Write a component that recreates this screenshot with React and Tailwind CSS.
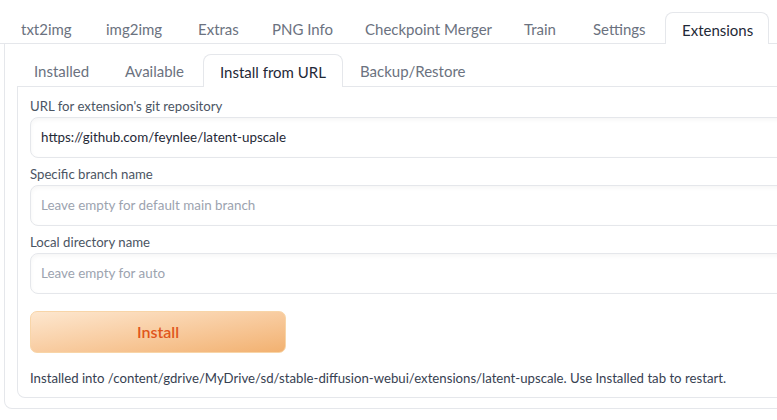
export default function App() {
  const topTabs = [
    ["txt2img", 85],
    ["img2img", 92],
    ["Extras", 74],
    ["PNG Info", 93],
    ["Checkpoint Merger", 159],
    ["Train", 69],
    ["Settings", 88],
  ];
  const innerTabs = [
    ["Installed", 91],
    ["Available", 95],
  ];
  return (
    <div
      className="w-[777px] h-[420px] overflow-hidden bg-white"
      style={{ fontFamily: "Lato, 'Noto Sans', sans-serif" }}
    >
      <div className="w-[800px] pl-[4px] pt-[13px]">
        {/* top tabs */}
        <div className="flex items-end h-[31px] border-b border-[#e5e7eb] -ml-[4px] pl-[5px]">
          {topTabs.map(([t, w]) => (
            <div
              key={t}
              className="h-[31px] flex items-center pt-[3px] pl-[16px] whitespace-nowrap text-[15px] text-[#6b7280] shrink-0"
              style={{ width: w }}
            >
              {t}
            </div>
          ))}
          <div className="relative h-[32px] -mb-px w-[104px] shrink-0 flex items-center pt-[3px] pl-[16px] whitespace-nowrap text-[15px] text-[#1f2937] bg-white border border-b-0 border-[#e5e7eb] rounded-t-[8px]">
            Extensions
          </div>
        </div>
        {/* outer panel */}
        <div className="border border-t-0 border-[#e5e7eb] rounded-b-[8px] pt-[11px] pb-[10px] pl-[12px] h-[365px]">
          <div className="flex items-end h-[32px] border-b border-[#e5e7eb]">
            {innerTabs.map(([t, w]) => (
              <div
                key={t}
                className="h-[32px] flex items-center pt-[3px] pl-[17px] whitespace-nowrap text-[15px] text-[#6b7280] shrink-0"
                style={{ width: w }}
              >
                {t}
              </div>
            ))}
            <div className="h-[33px] -mb-px w-[140px] shrink-0 flex items-center pt-[3px] pl-[16px] whitespace-nowrap text-[15px] text-[#1f2937] bg-white border border-b-0 border-[#e5e7eb] rounded-t-[8px]">
              Install from URL
            </div>
            <div className="h-[32px] flex items-center pt-[3px] pl-[17px] whitespace-nowrap text-[15px] text-[#6b7280] shrink-0">
              Backup/Restore
            </div>
          </div>
          <div className="border border-t-0 border-[#e5e7eb] rounded-b-[8px] h-[311px] pl-[12px] pt-[9px]">
            <Field label="URL for extension's git repository" value="https://github.com/feynlee/latent-upscale" />
            <Field label="Specific branch name" placeholder="Leave empty for default main branch" />
            <Field label="Local directory name" placeholder="Leave empty for auto" />
            <button className="mt-[17px] w-[256px] h-[42px] rounded-[7px] border border-[#f8d5a8] bg-gradient-to-br from-[#fde7cf] to-[#f2b170] text-[#e0561b] text-[16px] font-semibold flex items-center justify-center">
              Install
            </button>
            <div className="mt-[15px] text-[13.2px] text-[#374151] whitespace-nowrap leading-[20px]">
              Installed into /content/gdrive/MyDrive/sd/stable-diffusion-webui/extensions/latent-upscale. Use Installed tab to restart.
            </div>
          </div>
        </div>
      </div>
    </div>
  );
}

function Field({ label, value, placeholder }) {
  return (
    <div className="mb-[6px]">
      <div className="text-[13.2px] text-[#4b5563] leading-[20px] h-[20px]">{label}</div>
      <div className="mt-[1px] h-[41px] border border-[#e5e7eb] rounded-[8px] bg-white shadow-[inset_0_2px_4px_rgba(0,0,0,0.04)] flex items-center pl-[10px] text-[13.4px] whitespace-nowrap">
        {value ? (
          <span className="text-[#1f2937]">{value}</span>
        ) : (
          <span className="text-[#9ca3af]">{placeholder}</span>
        )}
      </div>
    </div>
  );
}
